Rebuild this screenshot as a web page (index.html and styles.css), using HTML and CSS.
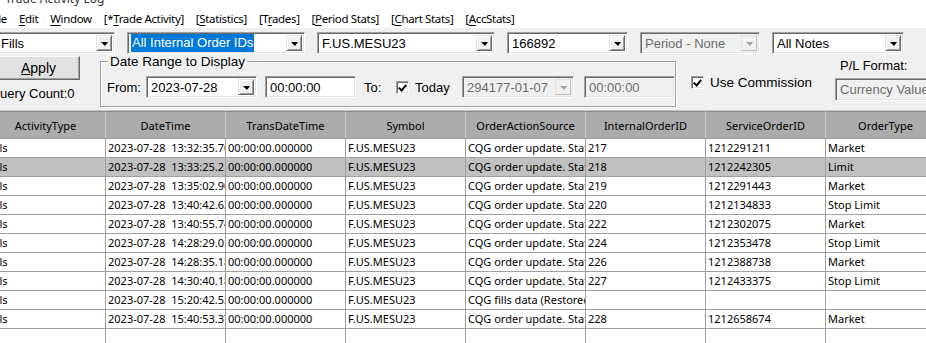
FILE: index.html
```html
<!DOCTYPE html>
<html lang="en">
<head>
  <meta charset="UTF-8">
  <title>Trade Activity Log</title>
  <link rel="stylesheet" href="styles.css">
</head>
<body>
  <div class="titlebar"><span>Trade Activity Log</span></div>

  <div class="menubar">
    <span>File</span>
    <span><u>E</u>dit</span>
    <span><u>W</u>indow</span>
    <span>[*<u>T</u>rade Activity]</span>
    <span>[<u>S</u>tatistics]</span>
    <span>[T<u>r</u>ades]</span>
    <span>[<u>P</u>eriod Stats]</span>
    <span>[<u>C</u>hart Stats]</span>
    <span>[<u>A</u>ccStats]</span>
  </div>

  <div class="toolbar">
    <div class="combo w-type"><span class="value">Fills</span><span class="drop"></span></div>
    <div class="combo w-ids"><span class="value"><span class="selected">All Internal Order IDs</span></span><span class="drop"></span></div>
    <div class="combo w-symbol"><span class="value">F.US.MESU23</span><span class="drop"></span></div>
    <div class="combo w-account"><span class="value">166892</span><span class="drop"></span></div>
    <div class="combo w-period disabled"><span class="value">Period - None</span><span class="drop"></span></div>
    <div class="combo w-notes"><span class="value">All Notes</span><span class="drop"></span></div>
  </div>

  <div class="options">
    <div class="left-col">
      <button class="button"><u>A</u>pply</button>
      <div class="count">Query Count:0</div>
    </div>

    <fieldset class="daterange">
      <legend>Date Range to Display</legend>
      <span class="lbl from">From:</span>
      <div class="combo w-date"><span class="value">2023-07-28</span><span class="drop"></span></div>
      <div class="edit w-time">00:00:00</div>
      <span class="lbl to">To:</span>
      <span class="box checked"></span>
      <span class="lbl today">Today</span>
      <div class="combo w-date2 disabled"><span class="value">294177-01-07</span><span class="drop"></span></div>
      <div class="edit w-time2 disabled">00:00:00</div>
    </fieldset>

    <label class="commission"><span class="box checked"></span>Use Commission</label>

    <div class="plformat">
      <div class="pl-label">P/L Format:</div>
      <div class="edit w-currency disabled">Currency Value</div>
    </div>
  </div>

  <div class="grid">
    <table>
      <thead>
        <tr>
          <th>ActivityType</th><th>DateTime</th><th>TransDateTime</th><th>Symbol</th>
          <th>OrderActionSource</th><th>InternalOrderID</th><th>ServiceOrderID</th><th>OrderType</th>
        </tr>
      </thead>
      <tbody>
        <tr><td>Fills</td><td>2023-07-28  13:32:35.706</td><td>00:00:00.000000</td><td>F.US.MESU23</td><td>CQG order update. Status: Filled</td><td>217</td><td>1212291211</td><td>Market</td></tr>
        <tr class="sel"><td>Fills</td><td>2023-07-28  13:33:25.213</td><td>00:00:00.000000</td><td>F.US.MESU23</td><td>CQG order update. Status: Filled</td><td>218</td><td>1212242305</td><td>Limit</td></tr>
        <tr><td>Fills</td><td>2023-07-28  13:35:02.906</td><td>00:00:00.000000</td><td>F.US.MESU23</td><td>CQG order update. Status: Filled</td><td>219</td><td>1212291443</td><td>Market</td></tr>
        <tr><td>Fills</td><td>2023-07-28  13:40:42.631</td><td>00:00:00.000000</td><td>F.US.MESU23</td><td>CQG order update. Status: Filled</td><td>220</td><td>1212134833</td><td>Stop Limit</td></tr>
        <tr><td>Fills</td><td>2023-07-28  13:40:55.742</td><td>00:00:00.000000</td><td>F.US.MESU23</td><td>CQG order update. Status: Filled</td><td>222</td><td>1212302075</td><td>Market</td></tr>
        <tr><td>Fills</td><td>2023-07-28  14:28:29.017</td><td>00:00:00.000000</td><td>F.US.MESU23</td><td>CQG order update. Status: Filled</td><td>224</td><td>1212353478</td><td>Stop Limit</td></tr>
        <tr><td>Fills</td><td>2023-07-28  14:28:35.185</td><td>00:00:00.000000</td><td>F.US.MESU23</td><td>CQG order update. Status: Filled</td><td>226</td><td>1212388738</td><td>Market</td></tr>
        <tr><td>Fills</td><td>2023-07-28  14:30:40.184</td><td>00:00:00.000000</td><td>F.US.MESU23</td><td>CQG order update. Status: Filled</td><td>227</td><td>1212433375</td><td>Stop Limit</td></tr>
        <tr><td>Fills</td><td>2023-07-28  15:20:42.522</td><td>00:00:00.000000</td><td>F.US.MESU23</td><td>CQG fills data (Restored)</td><td></td><td></td><td></td></tr>
        <tr><td>Fills</td><td>2023-07-28  15:40:53.371</td><td>00:00:00.000000</td><td>F.US.MESU23</td><td>CQG order update. Status: Filled</td><td>228</td><td>1212658674</td><td>Market</td></tr>
        <tr class="empty"><td></td><td></td><td></td><td></td><td></td><td></td><td></td><td></td></tr>
      </tbody>
    </table>
  </div>
</body>
</html>
```

FILE: styles.css
```css
/* Reset */
* {
  margin: 0;
  padding: 0;
  box-sizing: border-box;
}

body {
  width: 926px;
  height: 343px;
  overflow: hidden;
  background-color: #f0f0f0;
  font-family: "Liberation Sans", Arial, sans-serif;
  font-size: 13px;
  color: #000;
}

/* Window title (mostly scrolled off the top) */
.titlebar {
  height: 9px;
  background-color: #fff;
  overflow: hidden;
}

.titlebar span {
  display: block;
  margin-top: -9px;
  padding-left: 5px;
  font-family: "Noto Sans", sans-serif;
  font-size: 12px;
  line-height: 16px;
  color: #333;
}

/* Menu bar */
.menubar {
  height: 19px;
  display: flex;
  align-items: center;
  gap: 12px;
  margin-left: -10px;
  background-color: #fff;
  font-family: "Noto Sans", sans-serif;
  font-size: 11.5px;
  letter-spacing: -0.35px;
}

.menubar u {
  text-underline-offset: 2px;
}

/* First line of drop-downs */
.toolbar {
  display: flex;
  gap: 12px;
  margin-top: 4px;
  margin-left: -4px;
}

.combo,
.edit {
  height: 22px;
  display: flex;
  align-items: center;
  background-color: #fff;
  border: 1px solid;
  border-color: #a0a0a0 #fff #fff #a0a0a0;
  box-shadow: inset 1px 1px 0 #696969, inset -1px -1px 0 #e3e3e3;
  padding: 2px;
  white-space: nowrap;
  overflow: hidden;
}

.combo .value {
  flex: 1;
  padding-left: 2px;
  overflow: hidden;
}

.combo .selected {
  display: inline-block;
  height: 18px;
  line-height: 18px;
  margin-left: -1px;
  padding: 0 1px;
  background-color: #0078d7;
  color: #fff;
}

.combo .drop {
  width: 16px;
  height: 16px;
  display: flex;
  align-items: center;
  justify-content: center;
  background-color: #f0f0f0;
  border: 1px solid;
  border-color: #e3e3e3 #696969 #696969 #e3e3e3;
  box-shadow: inset 1px 1px 0 #fff, inset -1px -1px 0 #a0a0a0;
}

.combo .drop::after {
  content: "";
  border-left: 4px solid transparent;
  border-right: 3px solid transparent;
  border-top: 4px solid #000;
  margin-top: 1px;
}

.edit {
  padding-left: 4px;
}

.disabled {
  background-color: #f0f0f0;
  color: #6d6d6d;
}

.combo.disabled .drop::after {
  border-top-color: #a0a0a0;
}

.combo.disabled .drop {
  border-color: #e3e3e3 #bfbfbf #bfbfbf #e3e3e3;
  box-shadow: none;
}

.w-type { width: 119px; }
.w-ids { width: 178px; }
.w-symbol { width: 178px; }
.w-account { width: 121px; }
.w-period { width: 120px; }
.w-notes { width: 132px; }

/* Second line: apply, date range, commission, format */
.options {
  display: flex;
  align-items: flex-start;
  margin-left: -10px;
}

.left-col {
  width: 90px;
  padding-top: 2px;
}

.button {
  display: block;
  width: 83px;
  height: 24px;
  margin-left: 7px;
  font-family: inherit;
  font-size: 14px;
  background-color: #e1e1e1;
  border: 1px solid;
  border-color: #fff #696969 #696969 #fff;
  box-shadow: inset -1px -1px 0 #a0a0a0;
  color: #000;
}

.count {
  margin-top: 6px;
  line-height: 15px;
  white-space: nowrap;
}

.daterange {
  display: flex;
  align-items: center;
  margin-left: 20px;
  width: 583px;
  height: 53px;
  padding: 3px 0 4px 6px;
  border: 1px solid #a0a0a0;
  box-shadow: 1px 1px 0 #fff, inset 1px 1px 0 #fff;
}

.daterange legend {
  margin-left: 1px;
  padding: 0 2px;
  line-height: 15px;
  font-size: 13.5px;
}

.lbl {
  white-space: nowrap;
}

.from { width: 39px; }
.w-date { width: 111px; }
.w-time { width: 91px; margin-left: 8px; }
.to { margin-left: 8px; width: 32px; }
.today { margin-left: 6px; width: 47px; }
.w-date2 { width: 112px; }
.w-time2 { width: 91px; margin-left: 10px; }

.box {
  display: inline-block;
  position: relative;
  width: 13px;
  height: 13px;
  flex-shrink: 0;
  background-color: #fff;
  border: 1px solid;
  border-color: #a0a0a0 #fff #fff #a0a0a0;
  box-shadow: inset 1px 1px 0 #696969, inset -1px -1px 0 #e3e3e3;
}

.box.checked::after {
  content: "";
  position: absolute;
  left: 3px;
  top: 1px;
  width: 3px;
  height: 6px;
  border: solid #000;
  border-width: 0 2px 2px 0;
  transform: rotate(40deg);
}

.commission {
  display: flex;
  align-items: center;
  gap: 6px;
  margin-left: 15px;
  margin-top: 21px;
  white-space: nowrap;
  font-size: 13.5px;
}

.plformat {
  margin-left: 23px;
  margin-top: 4px;
}

.pl-label {
  padding-left: 5px;
  line-height: 15px;
  margin-bottom: 5px;
  white-space: nowrap;
}

.w-currency {
  width: 110px;
  height: 23px;
}

/* Activity grid */
.grid {
  margin-top: 3px;
  border-top: 1px solid #c8c8c8;
}

.grid table {
  table-layout: fixed;
  width: 960px;
  margin-left: -14px;
  border-collapse: separate;
  border-spacing: 0;
  font-family: "Noto Sans", sans-serif;
  font-size: 11px;
}

.grid th {
  width: 120px;
  height: 28px;
  font-weight: normal;
  background-color: #ababab;
  border-top: 1px solid #8a8a8a;
  border-right: 1px solid #c8c8c8;
  border-bottom: 1px solid #a0a0a0;
  text-align: center;
  white-space: nowrap;
  overflow: hidden;
}

.grid td {
  line-height: 18px;
  padding: 0 0 0 2px;
  border-right: 1px solid #a0a0a0;
  border-bottom: 1px solid #a0a0a0;
  background-color: #fff;
  white-space: pre;
  overflow: hidden;
  text-overflow: clip;
}

.grid tr.sel td {
  background-color: #c0c0c0;
}

.grid tr.empty td {
  height: 19px;
}
```
